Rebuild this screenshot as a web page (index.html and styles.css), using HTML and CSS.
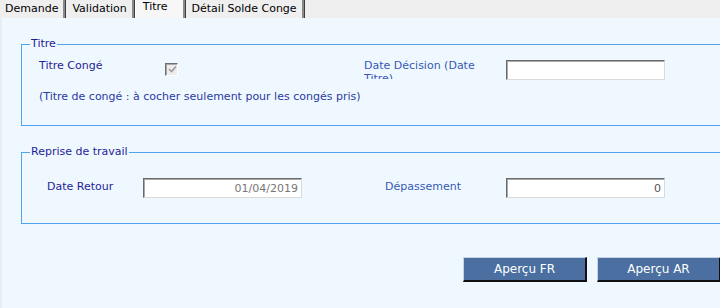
FILE: index.html
```html
<!DOCTYPE html>
<html lang="fr">
<head>
	<meta charset="UTF-8">
	<title>Titre</title>
	<link rel="stylesheet" href="styles.css">
</head>
<body>
	<div class="tabs">
		<span class="tab">Demande</span><span class="tab">Validation</span><span class="tab active">Titre</span><span class="tab">Détail Solde Conge</span>
	</div>
	<div class="panel">
		<fieldset class="box box-titre">
			<legend>Titre</legend>
			<div class="row row-titre">
				<span class="lbl lbl-1">Titre Congé</span>
				<span class="chk-cell">
					<span class="chk">
						<svg width="9" height="9" viewBox="0 0 9 9"><path d="M1 4 L3.5 6.5 L8 1.5" fill="none" stroke="#9a9a9a" stroke-width="1.6"/></svg>
					</span>
				</span>
				<span class="lbl lbl-2 clip">Date Décision (Date Titre)</span>
				<input class="field" type="text" value="">
			</div>
			<p class="note">(Titre de congé : à cocher seulement pour les congés pris)</p>
		</fieldset>

		<fieldset class="box box-reprise">
			<legend>Reprise de travail</legend>
			<div class="row row-reprise">
				<span class="lbl lbl-1">Date Retour</span>
				<input class="field num" type="text" value="01/04/2019" readonly>
				<span class="spacer"></span>
				<span class="lbl lbl-2">Dépassement</span>
				<input class="field num dark" type="text" value="0">
			</div>
		</fieldset>

		<div class="actions">
			<button class="btn">Aperçu FR</button>
			<button class="btn">Aperçu AR</button>
		</div>
	</div>
</body>
</html>
```

FILE: styles.css
```css
body {
	margin: 0;
	background: #f0f8ff;
	font-family: "DejaVu Sans", Verdana, sans-serif;
	font-size: 11px;
	overflow: hidden;
}
.tabs {
	display: flex;
	height: 18px;
	background: #efefef;
	white-space: nowrap;
}
.tab {
	display: block;
	height: 18px;
	line-height: 18px;
	padding: 0 7px 0 5px;
	color: #000;
	border-right: 1px solid #3c3c3c;
	box-shadow: inset -2px 0 #8a8a8a;
	margin-right: 1px;
}
.tab.active {
	background: #f7f7f7;
	line-height: 14px;
	padding: 0 17px 0 7px;
	border-left: 1px solid #ffffff;
	margin-left: -1px;
}
.panel {
	height: 290px;
	border-left: 2px solid #e8edf2;
	overflow: hidden;
}
.box {
	margin: 19px 0 0 19px;
	padding: 0;
	width: 760px;
	border: 1px solid #4ea3ee;
}
.box legend {
	margin-left: 8px;
	padding: 0 1px;
	line-height: 14px;
	color: #1e1e96;
}
.row {
	display: flex;
	align-items: flex-start;
}
.row-titre {
	padding: 7px 0 0 17px;
	height: 22px;
}
.row-reprise {
	padding: 19px 0 25px 25px;
}
.lbl {
	display: block;
	line-height: 13px;
	padding-top: 1px;
	color: #1e1e96;
}
.row-titre .lbl-1 {
	width: 126px;
}
.chk-cell {
	width: 199px;
	padding-top: 5px;
}
.chk {
	display: block;
	width: 11px;
	height: 11px;
	background: #ececec;
	border: 1px solid;
	border-color: #6e6e6e #ffffff #ffffff #6e6e6e;
	box-shadow: inset 1px 1px #a8a8a8;
}
.chk svg {
	display: block;
	margin: 1px 0 0 2px;
}
.lbl-2 {
	color: #3658b4;
}
.row-titre .lbl-2 {
	width: 142px;
	padding-right: 20px;
	box-sizing: border-box;
}
.clip {
	height: 21px;
	overflow: hidden;
}
.field {
	display: block;
	box-sizing: border-box;
	width: 159px;
	height: 20px;
	margin: 2px 0 0;
	padding: 0 3px;
	background: #fff;
	border: 1px solid;
	border-color: #6a6a6a #dadada #dadada #6a6a6a;
	box-shadow: inset 1px 1px #a9a9a9;
	font-family: "DejaVu Sans", Verdana, sans-serif;
	font-size: 11px;
	color: #777;
	outline: none;
}
.row-reprise .field {
	margin-top: 0;
}
.row-reprise .lbl {
	padding-top: 2px;
}
.row-reprise .lbl-1 {
	width: 96px;
}
.spacer {
	width: 83px;
}
.row-reprise .lbl-2 {
	width: 121px;
}
.num {
	text-align: right;
}
.dark {
	color: #555;
}
.note {
	margin: 10px 0 22px 17px;
	line-height: 13px;
	color: #2a3aa2;
}
.actions {
	display: flex;
	gap: 10px;
	margin: 33px 0 0 461px;
}
.btn {
	flex: none;
	width: 124px;
	height: 25px;
	padding: 0;
	background: #4a6fa0;
	border-style: solid;
	border-width: 1px 2px 2px 1px;
	border-color: #c6d3e2 #111 #111 #c6d3e2;
	color: #fff;
	font-family: "DejaVu Sans", Verdana, sans-serif;
	font-size: 12px;
}
```
